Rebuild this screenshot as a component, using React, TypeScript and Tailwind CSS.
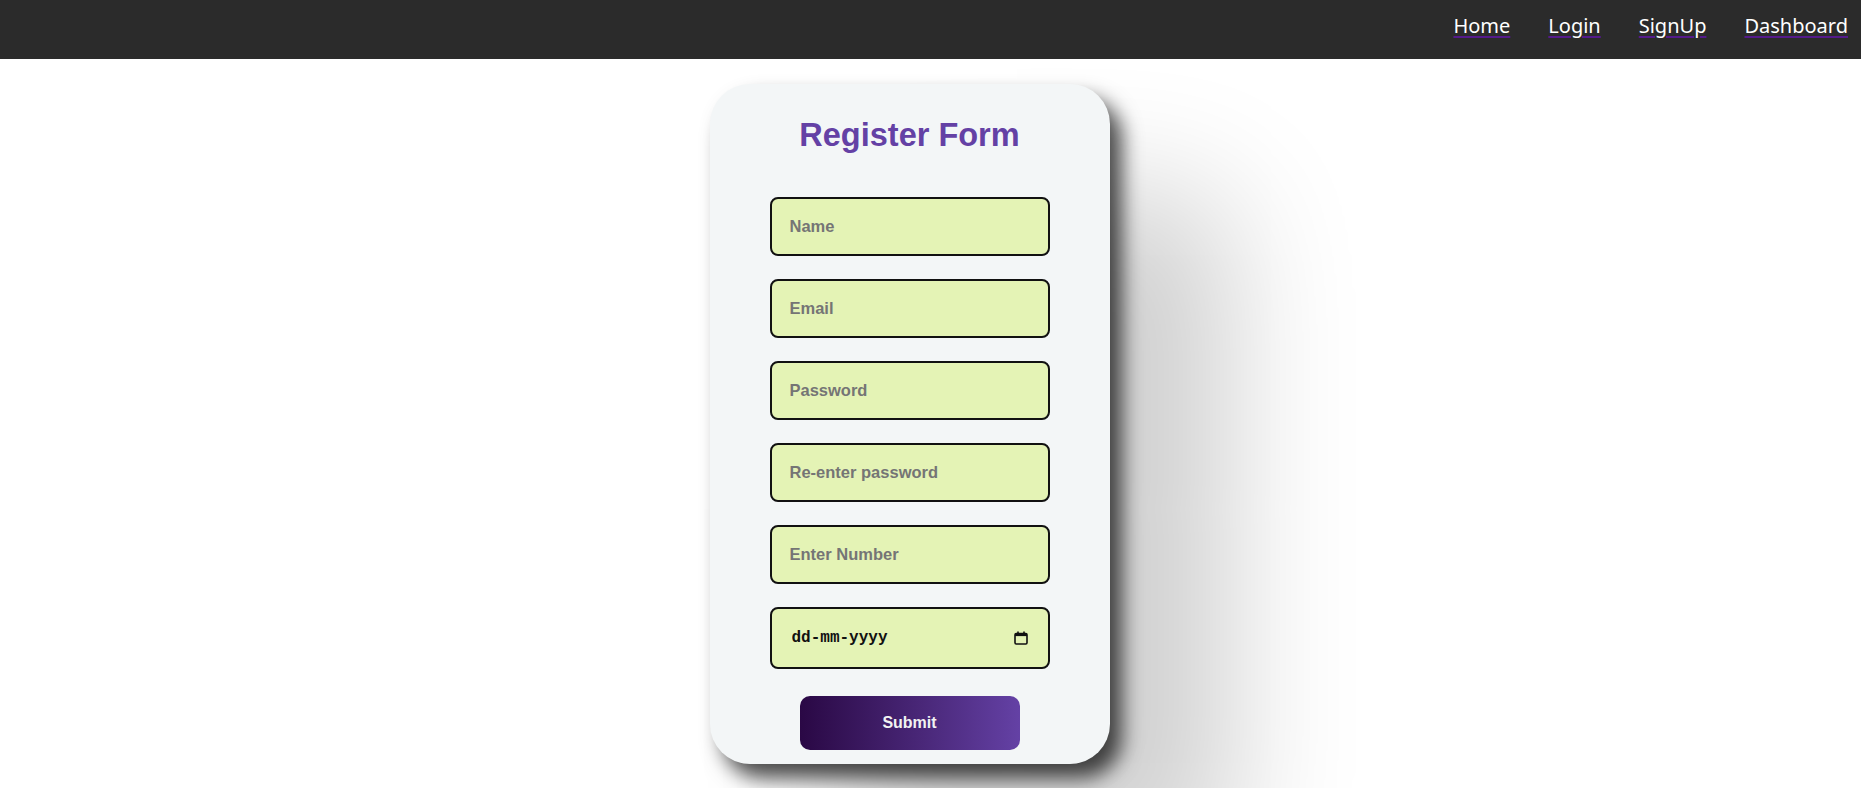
import React from "react";

function CalendarIcon() {
  return (
    <svg width="14" height="14" viewBox="0 0 14 14" fill="none">
      <rect x="1" y="2.5" width="12" height="10.5" rx="1.2" stroke="#111" strokeWidth="1.6" />
      <rect x="1" y="2.5" width="12" height="2.6" fill="#111" />
      <rect x="3.2" y="0.5" width="1.6" height="2.6" fill="#111" />
      <rect x="9.2" y="0.5" width="1.6" height="2.6" fill="#111" />
    </svg>
  );
}

const inputCls =
  "w-[280px] h-[59px] rounded-[8px] border-2 border-[#111] bg-[#e4f3b5] pl-[18px] pr-3 text-[16.5px] font-bold text-[#333] placeholder:text-[#757575] outline-none";

export default function App() {
  const links = ["Home", "Login", "SignUp", "Dashboard"];
  return (
    <div className="min-h-[788px] bg-white overflow-hidden" style={{ fontFamily: '"Liberation Sans", Arial, sans-serif' }}>
      <nav className="h-[59px] bg-[#2b2b2b] flex justify-end items-start pt-[11px] pr-[13px] gap-[38px]">
        {links.map((l) => (
          <a
            key={l}
            href="#"
            className="text-white text-[20px] underline decoration-[#551a8b] underline-offset-[3px]"
            style={{ fontFamily: '"Noto Sans", sans-serif' }}
          >
            {l}
          </a>
        ))}
      </nav>
      <div className="flex justify-center pr-[42px] pt-[25px]">
        <div className="w-[400px] h-[680px] rounded-[40px] bg-[#f3f6f7] flex flex-col items-center pt-[33px] shadow-[12px_14px_20px_rgba(0,0,0,0.7),120px_110px_130px_rgba(0,0,0,0.19)]">
          <h1 className="text-[32.5px] leading-[37px] font-bold text-[#6441a5]">Register Form</h1>
          <form className="mt-[43px] flex flex-col items-center gap-[23px]" onSubmit={(e) => e.preventDefault()}>
            <input className={inputCls} type="text" placeholder="Name" />
            <input className={inputCls} type="email" placeholder="Email" />
            <input className={inputCls} type="password" placeholder="Password" />
            <input className={inputCls} type="password" placeholder="Re-enter password" />
            <input className={inputCls} type="text" placeholder="Enter Number" />
            <div className="relative w-[280px] h-[62px]">
              <input
                className="w-full h-full rounded-[8px] border-2 border-[#111] bg-[#e4f3b5] pl-[20px] pr-10 text-[16px] font-bold text-[#111] placeholder:text-[#111] outline-none"
                style={{ fontFamily: '"Liberation Mono", monospace' }}
                type="text"
                placeholder="dd-mm-yyyy"
              />
              <span className="absolute right-[22px] top-[24px] flex">
                <CalendarIcon />
              </span>
            </div>
            <button
              type="submit"
              className="mt-[4px] w-[220px] h-[54px] rounded-[10px] bg-gradient-to-r from-[#2a0845] to-[#6441a5] text-[#f2f2f2] text-[16px] font-bold"
            >
              Submit
            </button>
          </form>
        </div>
      </div>
    </div>
  );
}
